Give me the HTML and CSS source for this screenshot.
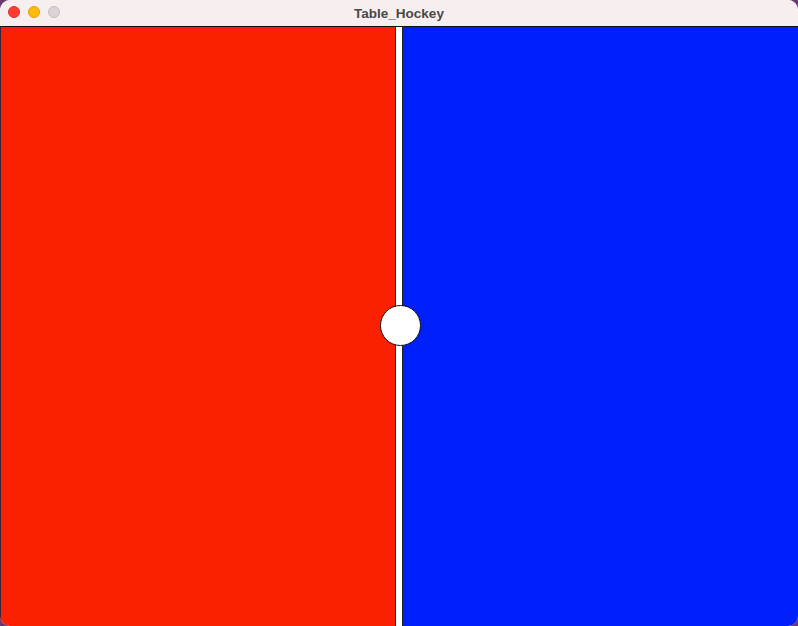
FILE: index.html
```html
<!DOCTYPE html>
<html>
<head>
<meta charset="utf-8">
<title>Table_Hockey</title>
<link rel="stylesheet" href="styles.css">
</head>
<body>
<div class="window">
  <div class="titlebar">
    <div class="lights">
      <span class="light close"></span>
      <span class="light min"></span>
      <span class="light max"></span>
    </div>
    <div class="title">Table_Hockey</div>
  </div>
  <div class="rink">
    <div class="half red"></div>
    <div class="center-line"></div>
    <div class="half blue"></div>
    <div class="puck"></div>
  </div>
</div>
</body>
</html>
```

FILE: styles.css
```css
html, body {
  margin: 0;
  padding: 0;
  width: 798px;
  height: 626px;
  overflow: hidden;
  background: #6a3a6e;
}
.window {
  width: 798px;
  height: 626px;
  display: flex;
  flex-direction: column;
  border-radius: 10px;
  overflow: hidden;
  background: #f7efef;
}
.titlebar {
  position: relative;
  height: 26px;
  flex: 0 0 26px;
  background: #f7efef;
  border-bottom: 1px solid #111;
  display: flex;
  align-items: center;
  justify-content: center;
}
.lights {
  position: absolute;
  left: 8px;
  top: 6px;
  display: flex;
  gap: 8px;
}
.light {
  width: 12px;
  height: 12px;
  border-radius: 50%;
  box-sizing: border-box;
}
.close { background: #fe3b30; border: 0.5px solid #e0302a; }
.min { background: #fdbc09; border: 0.5px solid #e0a106; }
.max { background: #d9d4d5; border: 0.5px solid #c4bfc0; }
.title {
  font-family: "Liberation Sans", Arial, sans-serif;
  font-weight: bold;
  font-size: 13.5px;
  color: #4a4747;
  margin-left: 0;
}
.rink {
  position: relative;
  flex: 1;
  display: flex;
}
.half.red {
  flex: 0 0 395px;
  background: #fb2000;
  border-left: 1px solid #3a2030;
  box-sizing: border-box;
}
.center-line {
  flex: 0 0 6px;
  background: #fff;
  border-left: 1px solid #222;
  border-right: 1px solid #222;
}
.half.blue {
  flex: 1;
  background: #0020fb;
}
.puck {
  position: absolute;
  left: 380px;
  top: 278px;
  width: 41px;
  height: 41px;
  box-sizing: border-box;
  border-radius: 50%;
  background: #fff;
  border: 1px solid #111;
}
```
